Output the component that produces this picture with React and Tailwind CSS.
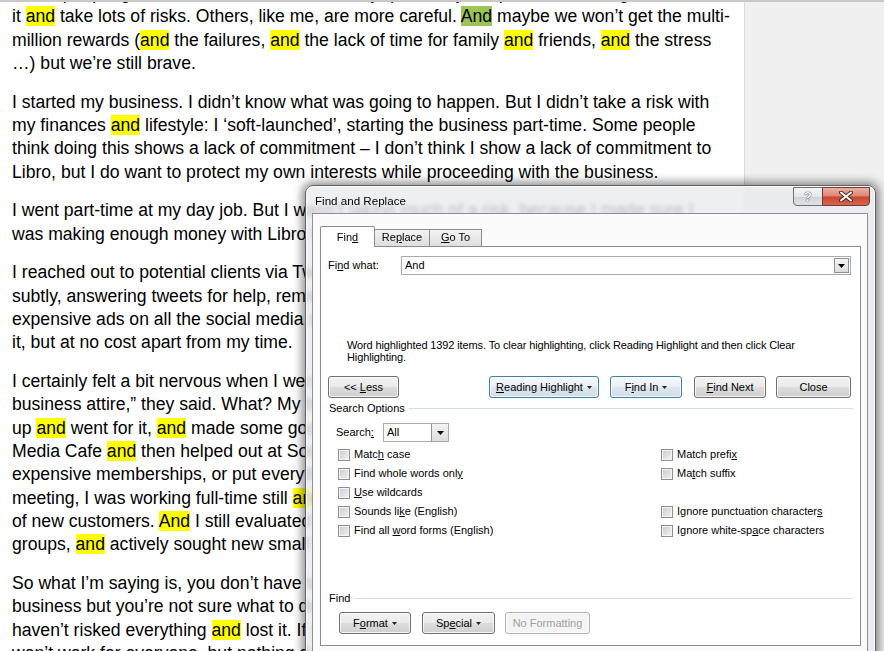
import React from "react";

const paras = [
  [
    "Some people go all in with their business. They quit their jobs, pour their savings into",
    "it [and] take lots of risks. Others, like me, are more careful. {And} maybe we won’t get the multi-",
    "million rewards ([and] the failures, [and] the lack of time for family [and] friends, [and] the stress",
    "…) but we’re still brave.",
  ],
  [
    "I started my business. I didn’t know what was going to happen. But I didn’t take a risk with",
    "my finances [and] lifestyle: I ‘soft-launched’, starting the business part-time. Some people",
    "think doing this shows a lack of commitment – I don’t think I show a lack of commitment to",
    "Libro, but I do want to protect my own interests while proceeding with the business.",
  ],
  [
    "I went part-time at my day job. But I wasn’t taking much of a risk, because I made sure I",
    "was making enough money with Libro before I cut back my hours [and] my salary.",
  ],
  [
    "I reached out to potential clients via Twitter [and] LinkedIn. I did it quietly [and]",
    "subtly, answering tweets for help, reminding people what I do. I didn’t take out",
    "expensive ads on all the social media sites. It took a while for people to notice",
    "it, but at no cost apart from my time.",
  ],
  [
    "I certainly felt a bit nervous when I went to my first networking event. “Wear",
    "business attire,” they said. What? My business attire is jeans! But I toughened",
    "up [and] went for it, [and] made some good contacts. I went to the Hamilton Social",
    "Media Cafe [and] then helped out at Social Media Week. I didn’t sign up for",
    "expensive memberships, or put everything into it. When I went to my first",
    "meeting, I was working full-time still [and] didn’t have time to meet hundreds",
    "of new customers. [And] I still evaluated whether I should join the business",
    "groups, [and] actively sought new small businesses to work with.",
  ],
  [
    "So what I’m saying is, you don’t have to risk it all. If you want to start a",
    "business but you’re not sure what to do, do it slowly. I’m living proof that I",
    "haven’t risked everything [and] lost it. If you’re careful, you can do this. It",
    "won’t work for everyone, but nothing does.",
  ],
];

// [word] = yellow highlight, {word} = current match
const renderLine = (line) =>
  line.split(/(\[[^\]]+\]|\{[^}]+\})/).map((part, i) => {
    if (part.startsWith("[")) return <span key={i} className="bg-[#ffff00]">{part.slice(1, -1)}</span>;
    if (part.startsWith("{")) return <span key={i} className="bg-[#9cc356]">{part.slice(1, -1)}</span>;
    return <React.Fragment key={i}>{part}</React.Fragment>;
  });

const U = ({ children }) => <span className="underline underline-offset-[1px]">{children}</span>;

const Caret = () => (
  <svg width="5" height="3" viewBox="0 0 5 3" className="ml-[4px]">
    <path d="M0 0h5L2.5 3z" fill="#222" />
  </svg>
);

const DropBtn = ({ className }) => (
  <div className={`flex items-center justify-center border border-[#8d9299] bg-[linear-gradient(#f4f4f4,#dcdcdc)] ${className}`}>
    <svg width="7" height="4" viewBox="0 0 7 4">
      <path d="M0 0h7L3.5 4z" fill="#000" />
    </svg>
  </div>
);

const Button = ({ className, children, blue, disabled, caret }) => {
  let look =
    "border-[#707070] bg-[linear-gradient(#f2f2f2_0%,#ebebeb_48%,#dddddd_52%,#cfcfcf_100%)] text-black";
  if (blue) look = "border-[#3c7fb1] bg-[linear-gradient(#f5f9fc_0%,#eaf0f5_48%,#dde6ee_52%,#d3dde6_100%)] text-black";
  if (disabled) look = "border-[#adb2b5] bg-[#f4f4f4] text-[#a0a0a0]";
  return (
    <div
      className={`flex h-[22px] items-center justify-center rounded-[3px] border shadow-[inset_0_0_0_1px_rgba(255,255,255,0.8)] ${look} ${className}`}
    >
      <span className="whitespace-pre">{children}</span>
      {caret && <Caret />}
    </div>
  );
};

const Check = ({ children }) => (
  <div className="flex h-[19px] items-center">
    <span className="h-[12px] w-[12px] shrink-0 border border-[#8e8f8f] bg-[linear-gradient(135deg,#c6cbd1,#f4f4f4)] shadow-[inset_0_0_0_1px_#f4f4f4]" />
    <span className="ml-[4px]">{children}</span>
  </div>
);

const Section = ({ label }) => (
  <div className="flex h-[14px] items-center pl-[8px] pr-[7px]">
    <span>{label}</span>
    <div className="ml-[4px] h-px flex-1 bg-[#d5dfe5]" />
  </div>
);

function Dialog() {
  return (
    <div className="absolute left-[305px] top-[185px] h-[480px] w-[571px] rounded-t-[8px] border border-[#5f6165] bg-[rgba(232,235,239,0.8)] text-[11px] leading-[13px] text-black backdrop-blur-[2px] shadow-[0_0_10px_3px_rgba(0,0,0,0.45),inset_0_0_0_1px_rgba(255,255,255,0.75)]">
      <div className="relative h-[27px] pl-[9px] pt-[8px] text-[11.6px] leading-[14px]">
        Find and Replace
        <div className="absolute right-[5px] top-[1px] flex h-[19px]">
          <div className="flex w-[30px] items-center justify-center rounded-bl-[4px] border border-[#6b6e73] bg-[linear-gradient(#f4f5f7_0%,#e3e6ea_50%,#cfd3d9_51%,#dfe3e8_100%)] text-[13px] font-bold text-white [text-shadow:0_0_1px_#333,0_0_1px_#333]">
            ?
          </div>
          <div className="-ml-px flex w-[48px] items-center justify-center rounded-br-[4px] border border-[#6e3a33] bg-[linear-gradient(#eab2a6_0%,#dd8371_48%,#c7452f_52%,#d8664c_100%)]">
            <svg width="14" height="11" viewBox="0 0 14 11">
              <path d="M2 1.5l10 8M12 1.5l-10 8" stroke="#4a2a25" strokeWidth="4" strokeLinecap="round" />
              <path d="M2 1.5l10 8M12 1.5l-10 8" stroke="#fff" strokeWidth="2" strokeLinecap="round" />
            </svg>
          </div>
        </div>
      </div>

      <div className="ml-[6px] mr-[7px] h-[450px] border border-[#8e8f8f] bg-[#fbfbfb] pl-[7px] pt-[12px]">
        <div className="relative z-10 flex h-[20px] items-end">
          <div className="-mb-px flex h-[21px] w-[55px] justify-center rounded-t-[2px] border border-b-0 border-[#898c95] bg-white pt-[4px]">
            <span>
              Fin<U>d</U>
            </span>
          </div>
          <div className="flex h-[17px] w-[55px] justify-center border border-b-0 border-l-0 border-[#898c95] bg-[linear-gradient(#f3f3f3,#dedede)] pt-[1px]">
            <span>
              Re<U>p</U>lace
            </span>
          </div>
          <div className="flex h-[17px] w-[52px] justify-center border border-b-0 border-l-0 border-[#898c95] bg-[linear-gradient(#f3f3f3,#dedede)] pt-[1px]">
            <span>
              <U>G</U>o To
            </span>
          </div>
        </div>

        <div className="h-[400px] w-[541px] border border-[#898c95] bg-white">
          <div className="mt-[9px] flex h-[19px] items-center pl-[7px]">
            <span className="w-[73px]">
              Fi<U>n</U>d what:
            </span>
            <div className="flex h-[19px] w-[450px] items-center border border-[#a5acb5] pl-[3px]">
              <span className="flex-1">And</span>
              <DropBtn className="mr-px h-[15px] w-[15px]" />
            </div>
          </div>

          <div className="mt-[64px] pl-[26px] leading-[12px] tracking-[-0.12px]">
            <div className="whitespace-nowrap">
              Word highlighted 1392 items. To clear highlighting, click Reading Highlight and then click Clear
            </div>
            <div>Highlighting.</div>
          </div>

          <div className="mt-[13px] flex pl-[7px]">
            <Button className="w-[71px]">
              {"<< "}
              <U>L</U>ess
            </Button>
            <Button blue caret className="ml-[90px] w-[110px]">
              <U>R</U>eading Highlight
            </Button>
            <Button blue caret className="ml-[11px] w-[72px]">
              F<U>i</U>nd In
            </Button>
            <Button className="ml-[12px] w-[72px]">
              <U>F</U>ind Next
            </Button>
            <Button className="ml-[10px] w-[75px]">Close</Button>
          </div>

          <div className="mt-[3px]">
            <Section label="Search Options" />
          </div>

          <div className="mt-[8px] flex h-[19px] items-center pl-[15px]">
            <span className="w-[47px]">
              Search<U>:</U>
            </span>
            <div className="flex h-[19px] w-[66px] items-center border border-[#a5acb5] pl-[3px]">
              <span className="flex-1">All</span>
              <DropBtn className="h-[17px] w-[17px] border-y-0 border-r-0" />
            </div>
          </div>

          <div className="mt-[3px] grid grid-cols-[323px_1fr] pl-[17px]">
            <Check>
              Matc<U>h</U> case
            </Check>
            <Check>
              Match prefi<U>x</U>
            </Check>
            <Check>
              Find whole words onl<U>y</U>
            </Check>
            <Check>
              Ma<U>t</U>ch suffix
            </Check>
            <Check>
              <U>U</U>se wildcards
            </Check>
            <div />
            <Check>
              Sounds li<U>k</U>e (English)
            </Check>
            <Check>
              Ignore punctuation character<U>s</U>
            </Check>
            <Check>
              Find all <U>w</U>ord forms (English)
            </Check>
            <Check>
              Ignore white-sp<U>a</U>ce characters
            </Check>
          </div>

          <div className="mt-[51px]">
            <Section label="Find" />
          </div>

          <div className="mt-[7px] flex pl-[18px]">
            <Button caret className="w-[72px]">
              F<U>o</U>rmat
            </Button>
            <Button caret className="ml-[11px] w-[73px]">
              Sp<U>e</U>cial
            </Button>
            <Button disabled className="ml-[10px] w-[85px]">
              No Formatting
            </Button>
          </div>
        </div>
      </div>
    </div>
  );
}

export default function App() {
  return (
    <div className="relative h-[651px] w-[884px] overflow-hidden bg-[#f0f0f0] font-['Liberation_Sans',Arial,sans-serif]">
      <div className="h-[2px] bg-[#c9c9c9]" />
      <div className="flex h-[649px]">
        <div className="w-[745px] overflow-hidden border-r border-[#d9d9d9] bg-white">
          <div className="-mt-[20px] pl-[12px] text-[17.6px] leading-[23.3px] text-black">
            {paras.map((lines, i) => (
              <div key={i} className="mb-[15.5px]">
                {lines.map((line, j) => (
                  <div key={j} className="whitespace-pre">
                    {renderLine(line)}
                  </div>
                ))}
              </div>
            ))}
          </div>
        </div>
        <div className="flex-1 bg-[#f0f0f0]" />
      </div>
      <Dialog />
    </div>
  );
}
